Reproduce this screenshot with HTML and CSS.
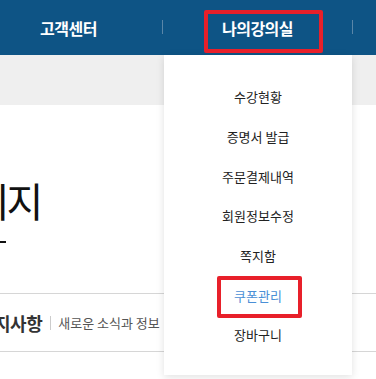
FILE: index.html
```html
<html><head><title>나의강의실</title>
<link rel="stylesheet" href="styles.css">
</head>
<body>

<div class="top-nav">
  <div class="nav-item">고객센터</div>
  <div class="nav-item nav-mine">
    나의강의실
    <span class="mark mark-nav"></span>
    <ul class="dropdown">
      <li>수강현황</li>
      <li>증명서 발급</li>
      <li>주문결제내역</li>
      <li>회원정보수정</li>
      <li>쪽지함</li>
      <li class="active">쿠폰관리</li>
      <li>장바구니</li>
    </ul>
    <span class="mark mark-coupon"></span>
  </div>
</div>

<div class="sub-band"></div>

<div class="page">
  <h1 class="page-title">페이지</h1>
  <div class="title-bar"></div>

  <div class="notice-head">
    <h2>공지사항</h2>
    <span class="notice-desc">새로운 소식과 정보</span>
  </div>

  <div class="notice-row">[공지] 홈페이지 프로모션 이벤트 안내 일정 관련 공지입니다</div>
</div>

</body></html>
```

FILE: styles.css
```css
:root {
  --nav: #0e5485;
  --band: #efefef;
  --line: #d6d6d6;
  --red: #e8202a;
  --blue: #4a8fd6;
}

body {
  margin: 0;
  padding: 0;
  background: #fff;
  font-family: 'Noto Sans CJK KR', 'Noto Sans', sans-serif;
  color: #222;
  overflow: hidden;
}

.top-nav {
  display: flex;
  height: 55px;
  background: var(--nav);
  margin-left: -26px;
  position: relative;
  z-index: 5;
}

.nav-item {
  position: relative;
  width: 189px;
  display: flex;
  align-items: center;
  justify-content: center;
  color: #fff;
  font-size: 16px;
  font-weight: bold;
  letter-spacing: -0.5px;
}

.nav-item::after {
  content: '';
  position: absolute;
  right: 0;
  top: 20px;
  width: 1px;
  height: 14px;
  background: #5a86a8;
}

.nav-mine {
  padding-right: 1px;
}

.mark {
  position: absolute;
  border: 4px solid var(--red);
  border-radius: 2px;
  box-sizing: border-box;
  z-index: 10;
}

.mark-nav {
  left: 41px;
  top: 10px;
  width: 119px;
  height: 43px;
}

.dropdown {
  position: absolute;
  left: 1px;
  top: 55px;
  width: 188px;
  margin: 0;
  padding: 22px 0 20px;
  list-style: none;
  background: #fff;
  box-shadow: 0 2px 8px rgba(0,0,0,0.12);
  font-weight: normal;
  letter-spacing: 0;
}

.dropdown li {
  height: 39.7px;
  display: flex;
  align-items: center;
  justify-content: center;
  color: #222;
  font-size: 13px;
}

.dropdown li.active {
  color: var(--blue);
}

.mark-coupon {
  left: 54px;
  top: 276px;
  width: 85px;
  height: 42px;
}

.sub-band {
  height: 50px;
  background: var(--band);
}

.page {
  overflow: hidden;
}

.page-title {
  margin: 71px 0 0 -61px;
  font-size: 40px;
  line-height: 48px;
  font-weight: normal;
  color: #111;
  letter-spacing: -3px;
}

.title-bar {
  width: 6px;
  height: 2px;
  background: #111;
  margin-top: 17px;
}

.notice-head {
  margin-top: 50px;
  height: 57px;
  border-top: 1px solid var(--line);
  border-bottom: 1px solid var(--line);
  display: flex;
  align-items: center;
  margin-left: -22px;
}

.notice-head h2 {
  margin: 0;
  font-size: 18px;
  font-weight: bold;
  color: #333;
  letter-spacing: -0.5px;
  padding-right: 8px;
  border-right: 1px solid #ccc;
  line-height: 14px;
}

.notice-desc {
  padding-left: 7px;
  font-size: 13px;
  color: #555;
}

.notice-row {
  margin-top: 23px;
  font-size: 13px;
  color: #777;
  white-space: nowrap;
}
```
